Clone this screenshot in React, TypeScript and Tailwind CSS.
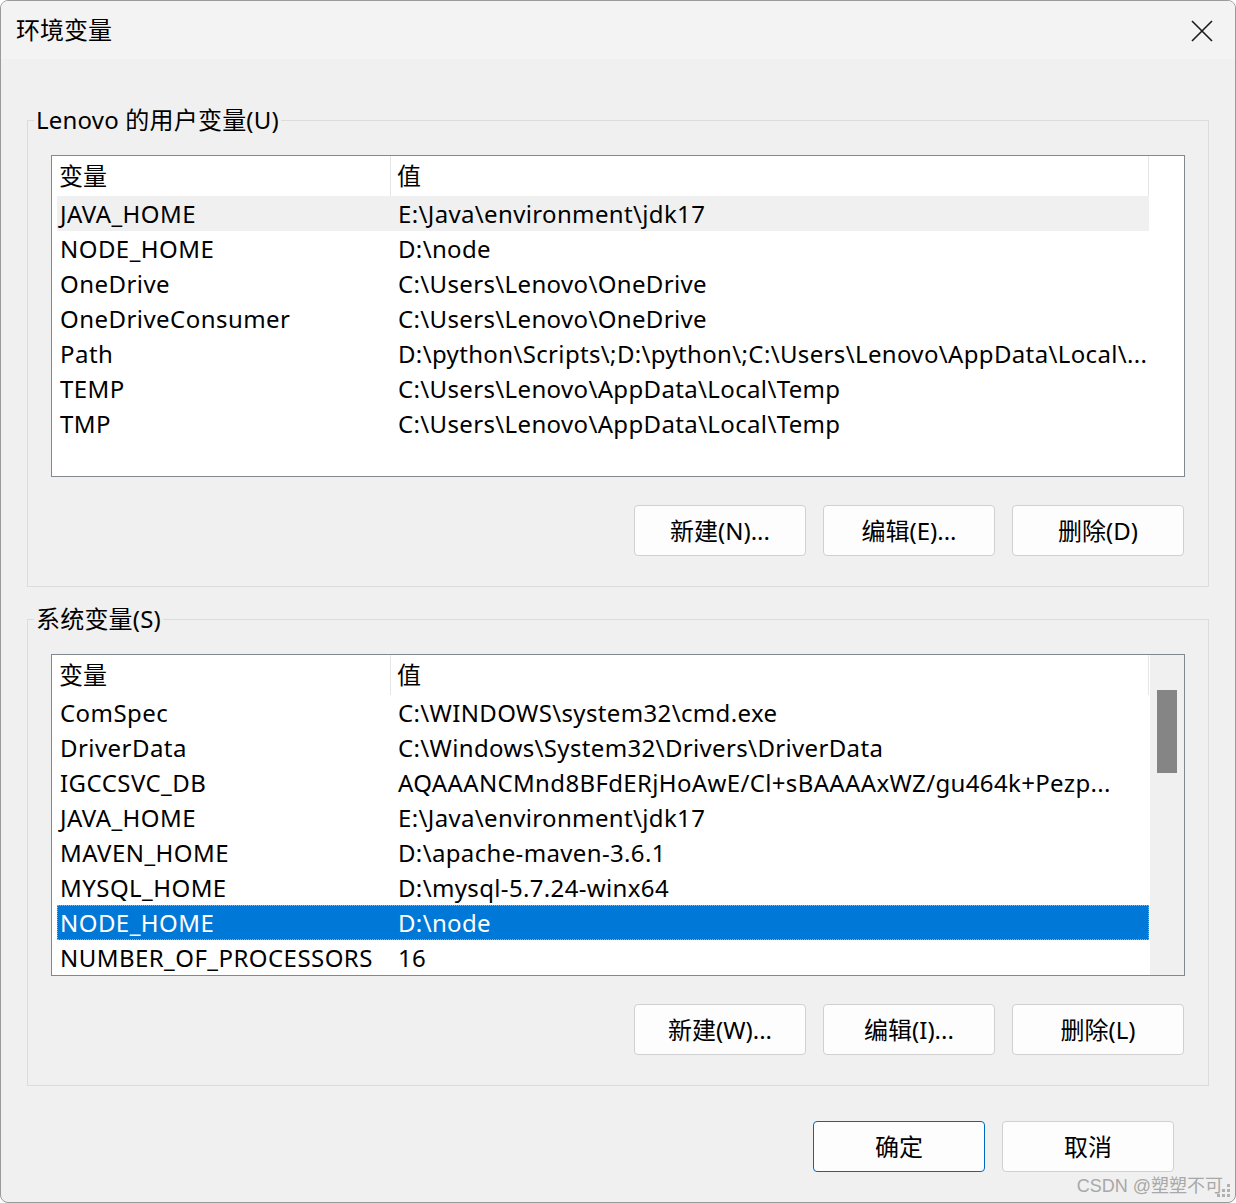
import React from 'react';

type Row = { name: string; value: string; state?: 'hover' | 'selected' };

const userVars: Row[] = [
  { name: 'JAVA_HOME', value: 'E:\\Java\\environment\\jdk17', state: 'hover' },
  { name: 'NODE_HOME', value: 'D:\\node' },
  { name: 'OneDrive', value: 'C:\\Users\\Lenovo\\OneDrive' },
  { name: 'OneDriveConsumer', value: 'C:\\Users\\Lenovo\\OneDrive' },
  { name: 'Path', value: 'D:\\python\\Scripts\\;D:\\python\\;C:\\Users\\Lenovo\\AppData\\Local\\...' },
  { name: 'TEMP', value: 'C:\\Users\\Lenovo\\AppData\\Local\\Temp' },
  { name: 'TMP', value: 'C:\\Users\\Lenovo\\AppData\\Local\\Temp' },
];

const systemVars: Row[] = [
  { name: 'ComSpec', value: 'C:\\WINDOWS\\system32\\cmd.exe' },
  { name: 'DriverData', value: 'C:\\Windows\\System32\\Drivers\\DriverData' },
  { name: 'IGCCSVC_DB', value: 'AQAAANCMnd8BFdERjHoAwE/Cl+sBAAAAxWZ/gu464k+Pezp...' },
  { name: 'JAVA_HOME', value: 'E:\\Java\\environment\\jdk17' },
  { name: 'MAVEN_HOME', value: 'D:\\apache-maven-3.6.1' },
  { name: 'MYSQL_HOME', value: 'D:\\mysql-5.7.24-winx64' },
  { name: 'NODE_HOME', value: 'D:\\node', state: 'selected' },
  { name: 'NUMBER_OF_PROCESSORS', value: '16' },
];

const WinButton = ({ label, primary }: { label: string; primary?: boolean }) => (
  <button
    className={
      primary
        ? 'w-[172px] h-[51px] rounded-[4px] border border-[#0067c0] bg-[#fdfdfd] text-[24px] leading-none text-black'
        : 'w-[172px] h-[51px] rounded-[4px] border border-[#d0d0d0] bg-[#fdfdfd] text-[24px] leading-none text-black'
    }
  >
    {label}
  </button>
);

const ListView = ({ rows, scrollbar }: { rows: Row[]; scrollbar?: boolean }) => (
  <div className="h-[322px] border border-[#828790] bg-white flex overflow-hidden">
    <div className="flex-1 pl-[5px] flex flex-col">
      <div className="h-[40px] flex items-center shrink-0 border-r border-[#e5e5e5]">
        <div className="w-[334px] h-full pl-[2px] flex items-center border-r border-[#e5e5e5]">变量</div>
        <div className="pl-[6px]">值</div>
      </div>
      {rows.map((r) => (
        <div
          key={r.name}
          className={
            r.state === 'selected'
              ? 'h-[35px] flex items-center shrink-0 bg-[#0078d7] text-white outline outline-1 outline-dotted outline-[#d9a35a] -outline-offset-1'
              : r.state === 'hover'
              ? 'h-[35px] flex items-center shrink-0 bg-[#f0f0f0]'
              : 'h-[35px] flex items-center shrink-0'
          }
        >
          <div className="w-[334px] pl-[3px] whitespace-nowrap tracking-[0.45px]">{r.name}</div>
          <div className="flex-1 pl-[7px] whitespace-nowrap overflow-hidden tracking-[0.35px]">{r.value}</div>
        </div>
      ))}
    </div>
    {scrollbar ? (
      <div className="w-[35px] border-l border-white bg-[#f0f0f0] shrink-0">
        <div className="mt-[35px] ml-[7px] w-[20px] h-[83px] bg-[#858585]" />
      </div>
    ) : (
      <div className="w-[35px] shrink-0" />
    )}
  </div>
);

const Group = ({
  title,
  rows,
  buttons,
  scrollbar,
  className,
}: {
  title: string;
  rows: Row[];
  buttons: string[];
  scrollbar?: boolean;
  className?: string;
}) => (
  <fieldset className={`border border-[#dcdcdc] px-[23px] pb-[30px] ${className ?? ''}`}>
    <legend className="-ml-[17px] px-[2px] leading-[32px] tracking-[0.2px]">{title}</legend>
    <div className="mt-[19px]">
      <ListView rows={rows} scrollbar={scrollbar} />
    </div>
    <div className="mt-[28px] flex justify-end gap-[17px] pr-[1px]">
      {buttons.map((b) => (
        <WinButton key={b} label={b} />
      ))}
    </div>
  </fieldset>
);

export default function App() {
  return (
    <div className="w-[1236px] h-[1203px] bg-white font-['Noto_Sans','Noto_Sans_CJK_SC',sans-serif] text-[24px] text-black">
      <div className="relative w-full h-full border border-[#9a9a9a] rounded-[8px] bg-[#f0f0f0] overflow-hidden flex flex-col">
        <div className="h-[58px] bg-[#f3f3f3] flex items-center justify-between pl-[15px] pr-[22px] shrink-0">
          <span className="text-[24px] leading-none">环境变量</span>
          <svg width="22" height="22" viewBox="0 0 22 22" className="mt-[1px]">
            <path d="M1 1 L21 21 M21 1 L1 21" stroke="#1a1a1a" strokeWidth="1.6" />
          </svg>
        </div>
        <div className="px-[26px] pt-[45px]">
          <Group title="Lenovo 的用户变量(U)" rows={userVars} buttons={['新建(N)...', '编辑(E)...', '删除(D)']} />
          <Group
            className="mt-[16px]"
            title="系统变量(S)"
            rows={systemVars}
            scrollbar
            buttons={['新建(W)...', '编辑(I)...', '删除(L)']}
          />
          <div className="mt-[35px] flex justify-end gap-[17px] pr-[35px]">
            <WinButton label="确定" primary />
            <WinButton label="取消" />
          </div>
        </div>
        <span className="absolute right-[12px] bottom-[7px] text-[18px] leading-none text-[#a8a8a8] font-['Liberation_Sans','Noto_Sans_CJK_SC',sans-serif]">
          CSDN @塑塑不可
        </span>
        <svg width="14" height="14" viewBox="0 0 14 14" className="absolute right-[4px] bottom-[4px]">
          <g fill="#b0b0b0">
            <rect x="10" y="0" width="3" height="3" />
            <rect x="10" y="5" width="3" height="3" />
            <rect x="5" y="5" width="3" height="3" />
            <rect x="10" y="10" width="3" height="3" />
            <rect x="5" y="10" width="3" height="3" />
            <rect x="0" y="10" width="3" height="3" />
          </g>
        </svg>
      </div>
    </div>
  );
}
